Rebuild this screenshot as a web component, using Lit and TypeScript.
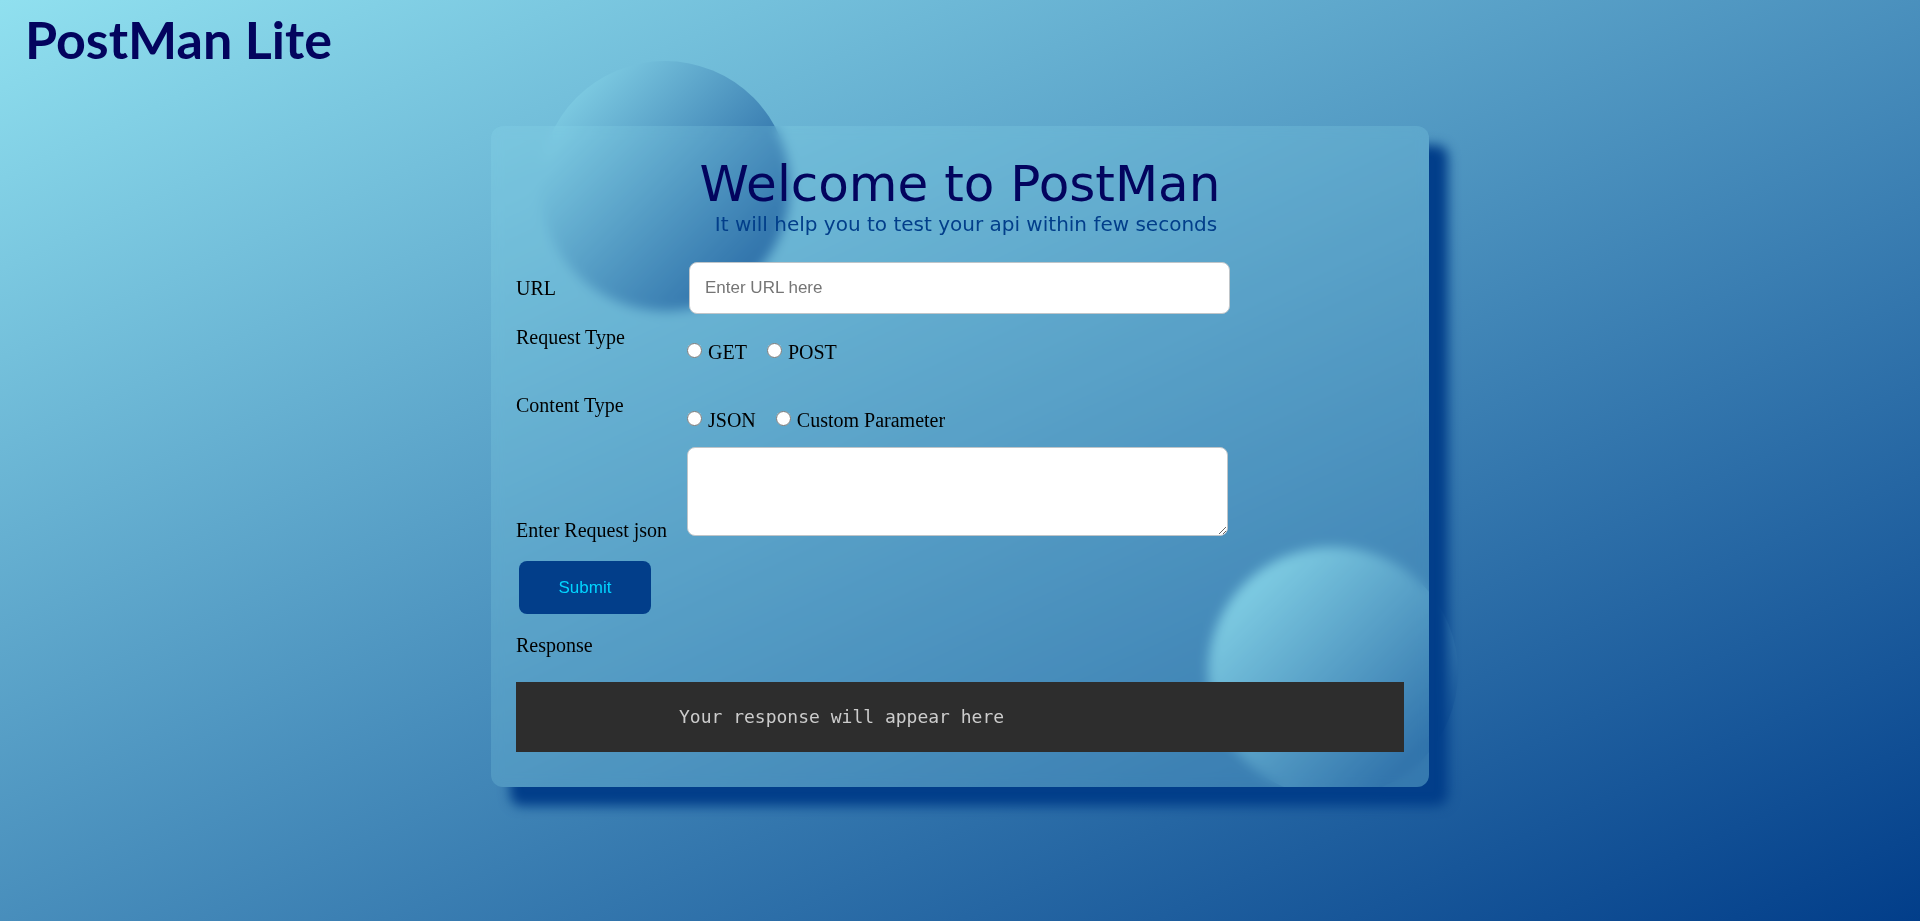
import { LitElement, html, css } from "lit";
import { customElement } from "lit/decorators.js";

@customElement("app-root")
export class AppRoot extends LitElement {
  static styles = css`
    :host {
      display: block;
      box-sizing: border-box;
      min-height: 100vh;
      font-family: "Liberation Serif", serif;
      font-size: 20px;
      line-height: 23px;
      color: #000;
      background: linear-gradient(155deg, #90e0ef, #023e8a);
    }
    * { box-sizing: border-box; }
    .brand {
      margin: 0;
      padding: 10px 25px 0;
      font-family: "Gill Sans", "Gill Sans MT", Lato, sans-serif;
      font-size: 52px;
      line-height: 58px;
      font-weight: 700;
      color: #03045e;
    }
    .stage {
      position: relative;
      width: 938px;
      max-width: 100%;
      margin: 58px auto 0;
    }
    .orb {
      position: absolute;
      width: 250px;
      height: 250px;
      border-radius: 50%;
      background: linear-gradient(135deg, #90e0ef, #023e8a);
    }
    .orb-top { top: -65px; left: 49px; }
    .orb-bottom { right: -29px; bottom: -10px; }
    .card {
      position: relative;
      padding: 29px 25px 35px;
      border-radius: 12px;
      background: rgba(144, 224, 239, 0.2);
      backdrop-filter: blur(6px);
      box-shadow: 19px 19px 12px #023e8a;
    }
    .intro {
      text-align: center;
      font-family: Verdana, "DejaVu Sans", sans-serif;
    }
    .title { margin: 0; font-size: 50px; line-height: 58px; font-weight: 400; color: #03045e; }
    .lead { margin: 0; padding-left: 12px; font-size: 20px; line-height: 22px; color: #023e8a; }
    .row { display: grid; grid-template-columns: 171px 1fr; }
    .url { align-items: center; margin: 27px 0 12px; }
    .field {
      display: block;
      width: 541px;
      max-width: 100%;
      border: 1px solid #bfc5c9;
      border-radius: 8px;
      background: #fff;
      font: 17px/20px "Liberation Sans", sans-serif;
      padding: 15px;
    }
    .field::placeholder { color: #757575; opacity: 1; }
    .url .field { margin-left: 2px; }
    .choice + .choice { margin-top: 30px; }
    .options { display: flex; gap: 20px; padding-top: 15px; }
    .option { display: flex; gap: 6px; }
    .radio { width: 15px; height: 15px; margin: 2px 0 0; }
    .body { align-items: end; margin-top: 15px; }
    .body .field { height: 89px; margin-bottom: 6px; resize: both; }
    .submit {
      display: block;
      width: 132px;
      height: 53px;
      margin: 19px 0 0 3px;
      border: 0;
      border-radius: 8px;
      background: #023e8a;
      color: #00d4ff;
      font: 17px/20px "Liberation Sans", sans-serif;
    }
    .caption { margin: 20px 0 0; }
    .result {
      margin: 25px 0 0;
      padding-left: 163px;
      background: #2d2d2d;
      color: #ccc;
      font: 18px/70px Consolas, "DejaVu Sans Mono", monospace;
      overflow: auto;
    }
  `;

  private choice(legend: string, name: string, options: string[]) {
    return html`
      <div class="row choice" role="radiogroup" aria-label=${legend}>
        <span>${legend}</span>
        <div class="options">
          ${options.map(
            (o) => html`<label class="option"><input class="radio" type="radio" name=${name} value=${o} />${o}</label>`
          )}
        </div>
      </div>
    `;
  }

  render() {
    return html`
      <h1 class="brand">PostMan Lite</h1>
      <main class="stage">
        <div class="orb orb-top"></div>
        <div class="orb orb-bottom"></div>
        <form class="card" @submit=${(e: Event) => e.preventDefault()}>
          <header class="intro">
            <h2 class="title">Welcome to PostMan</h2>
            <p class="lead">It will help you to test your api within few seconds</p>
          </header>
          <div class="row url">
            <label for="url">URL</label>
            <input class="field" id="url" type="text" placeholder="Enter URL here" />
          </div>
          ${this.choice("Request Type", "request", ["GET", "POST"])}
          ${this.choice("Content Type", "content", ["JSON", "Custom Parameter"])}
          <div class="row body">
            <label for="json">Enter Request json</label>
            <textarea class="field" id="json"></textarea>
          </div>
          <button class="submit" type="submit">Submit</button>
          <p class="caption">Response</p>
          <pre class="result">Your response will appear here</pre>
        </form>
      </main>
    `;
  }
}
